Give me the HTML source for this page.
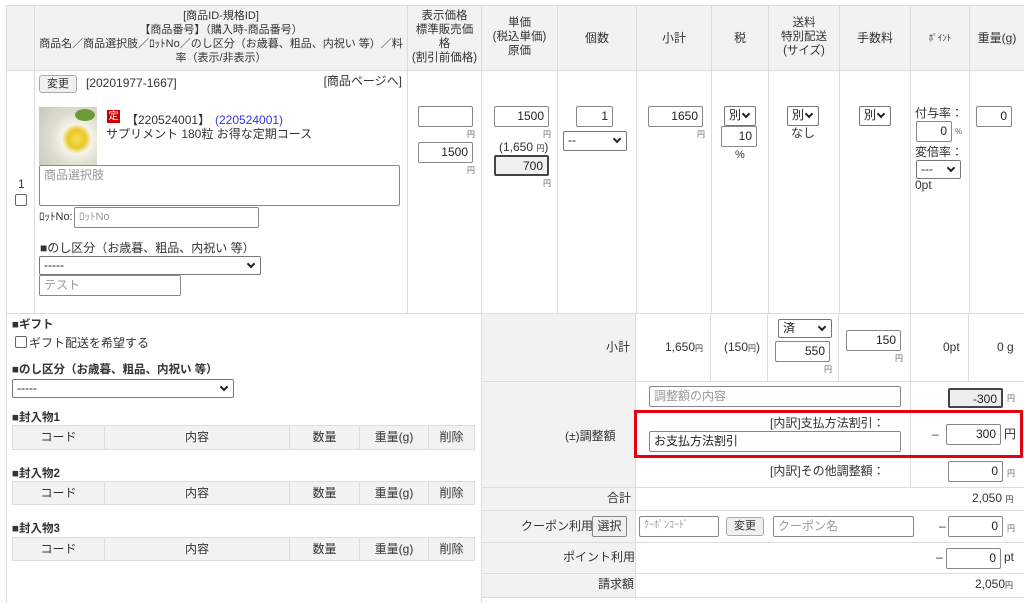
<!DOCTYPE html>
<html><head><meta charset="utf-8"><style>
*{box-sizing:border-box;margin:0;padding:0}
body{width:1024px;height:602px;overflow:hidden;background:#fff;font-family:"Liberation Sans","Noto Sans CJK JP",sans-serif;font-size:12px;color:#333;position:relative}
.a{position:absolute}
.c{position:absolute;border:1px solid #ddd}
.g{background:#f2f2f2}
.t{position:absolute;white-space:nowrap;line-height:14px}
.in{position:absolute;border:1px solid #888;border-radius:2px;background:#fff;text-align:right;padding-right:4px;font-size:12px;line-height:18px;color:#222;white-space:nowrap}
.ph{color:#999;text-align:left;padding-left:4px}
.sel{position:absolute;border:1px solid #777;border-radius:2px;background:#fff;font-size:12px;line-height:17px;padding-left:4px;color:#222;white-space:nowrap}
.sel:after{content:"";position:absolute;right:6px;top:4px;width:4px;height:4px;border-right:2px solid #222;border-bottom:2px solid #222;transform:rotate(45deg)}
.y{position:absolute;font-size:8px;color:#666}
.btn{position:absolute;border:1px solid #aaa;border-radius:3px;background:#f0f0f0;font-size:11px;text-align:center;line-height:16px}
.cb{position:absolute;width:12px;height:12px;border:1px solid #666;border-radius:2px;background:#fff}
.ctr{text-align:center}
</style></head><body>
<div class="c g" style="left:6px;top:5px;width:29px;height:66px"></div>
<div class="c g" style="left:34px;top:5px;width:374px;height:66px"></div>
<div class="c g" style="left:407px;top:5px;width:75px;height:66px"></div>
<div class="c g" style="left:481px;top:5px;width:77px;height:66px"></div>
<div class="c g" style="left:557px;top:5px;width:80px;height:66px"></div>
<div class="c g" style="left:636px;top:5px;width:76px;height:66px"></div>
<div class="c g" style="left:711px;top:5px;width:58px;height:66px"></div>
<div class="c g" style="left:768px;top:5px;width:72px;height:66px"></div>
<div class="c g" style="left:839px;top:5px;width:72px;height:66px"></div>
<div class="c g" style="left:910px;top:5px;width:60px;height:66px"></div>
<div class="c g" style="left:969px;top:5px;width:56px;height:66px"></div>
<div class="t ctr" style="left:34px;width:374px;top:9px;font-size:11px">[商品ID-規格ID]<br>【商品番号】（購入時-商品番号）<br>商品名／商品選択肢／ﾛｯﾄNo／のし区分（お歳暮、粗品、内祝い 等）／料<br>率（表示/非表示）</div>
<div class="t ctr" style="left:407px;width:75px;top:9px;font-size:11.5px">表示価格<br>標準販売価<br>格<br>(割引前価格)</div>
<div class="t ctr" style="left:481px;width:77px;top:16px;font-size:11.5px">単価<br>(税込単価)<br>原価</div>
<div class="t ctr" style="left:557px;width:80px;top:31px">個数</div>
<div class="t ctr" style="left:636px;width:76px;top:31px">小計</div>
<div class="t ctr" style="left:711px;width:58px;top:31px">税</div>
<div class="t ctr" style="left:768px;width:72px;top:16px;font-size:11.5px">送料<br>特別配送<br>(サイズ)</div>
<div class="t ctr" style="left:839px;width:72px;top:31px">手数料</div>
<div class="t ctr" style="left:910px;width:60px;top:31px;font-size:9px">ﾎﾟｲﾝﾄ</div>
<div class="t ctr" style="left:969px;width:56px;top:31px">重量(g)</div>
<div class="c" style="left:6px;top:70px;width:29px;height:244px"></div>
<div class="c" style="left:34px;top:70px;width:374px;height:244px"></div>
<div class="c" style="left:407px;top:70px;width:75px;height:244px"></div>
<div class="c" style="left:481px;top:70px;width:77px;height:244px"></div>
<div class="c" style="left:557px;top:70px;width:80px;height:244px"></div>
<div class="c" style="left:636px;top:70px;width:76px;height:244px"></div>
<div class="c" style="left:711px;top:70px;width:58px;height:244px"></div>
<div class="c" style="left:768px;top:70px;width:72px;height:244px"></div>
<div class="c" style="left:839px;top:70px;width:72px;height:244px"></div>
<div class="c" style="left:910px;top:70px;width:60px;height:244px"></div>
<div class="c" style="left:969px;top:70px;width:56px;height:244px"></div>
<div class="t" style="left:18px;top:177px">1</div>
<div class="cb" style="left:15px;top:194px"></div>
<div class="btn" style="left:39px;top:75px;width:38px;height:18px">変更</div>
<div class="t" style="left:86px;top:76px">[20201977-1667]</div>
<div class="t" style="right:622px;top:74px">[商品ページへ]</div>
<div class="a" style="left:39px;top:107px;width:58px;height:58px;background:radial-gradient(circle at 65% 55%,#f4e060 0,#e8c820 18%,#f6f3e8 30%,#dcdcd0 55%,#c8c8b8 100%)"></div>
<div class="a" style="left:75px;top:109px;width:20px;height:12px;background:#6c9c3a;border-radius:50%"></div>
<div class="a" style="left:107px;top:110px;width:13px;height:13px;background:#c00;color:#fff;font-size:10px;line-height:13px;text-align:center">定</div>
<div class="t" style="left:126px;top:113px">【220524001】</div>
<div class="t" style="left:215px;top:113px;color:#3333ee">(220524001)</div>
<div class="t" style="left:106px;top:127px">サプリメント 180粒 お得な定期コース</div>
<div class="in ph" style="left:39px;top:165px;width:361px;height:41px;line-height:18px">商品選択肢</div>
<div class="t" style="left:39px;top:210px;font-size:11px">ﾛｯﾄNo:</div>
<div class="in ph" style="left:74px;top:207px;width:185px;height:21px;font-size:11px">ﾛｯﾄNo</div>
<div class="t" style="left:40px;top:241px">■のし区分（お歳暮、粗品、内祝い 等）</div>
<div class="sel" style="left:39px;top:256px;width:222px;height:19px">-----</div>
<div class="in ph" style="left:39px;top:275px;width:142px;height:21px">テスト</div>
<div class="in" style="left:418px;top:106px;width:55px;height:21px"></div><div class="y" style="left:467px;top:129px">円</div>
<div class="in" style="left:418px;top:142px;width:55px;height:21px">1500</div><div class="y" style="left:467px;top:165px">円</div>
<div class="in" style="left:494px;top:106px;width:55px;height:21px">1500</div><div class="y" style="left:543px;top:129px">円</div>
<div class="t" style="left:499px;top:140px">(1,650 <span style="font-size:8px">円</span>)</div>
<div class="in" style="left:494px;top:155px;width:55px;height:21px;background:#f0f0f0;border:2px solid #444">700</div><div class="y" style="left:543px;top:178px">円</div>
<div class="in" style="left:576px;top:106px;width:37px;height:21px">1</div>
<div class="sel" style="left:563px;top:131px;width:64px;height:20px">--</div>
<div class="in" style="left:648px;top:106px;width:55px;height:21px">1650</div><div class="y" style="left:697px;top:129px">円</div>
<div class="sel" style="left:724px;top:106px;width:32px;height:20px">別</div>
<div class="in" style="left:721px;top:126px;width:36px;height:21px">10</div>
<div class="t" style="left:735px;top:148px;font-size:11px">%</div>
<div class="sel" style="left:787px;top:106px;width:32px;height:20px">別</div>
<div class="t" style="left:791px;top:126px">なし</div>
<div class="sel" style="left:859px;top:106px;width:32px;height:20px">別</div>
<div class="t" style="left:915px;top:106px">付与率：</div>
<div class="in" style="left:916px;top:121px;width:36px;height:21px">0</div><div class="y" style="left:955px;top:127px">%</div>
<div class="t" style="left:915px;top:145px">変倍率：</div>
<div class="sel" style="left:916px;top:160px;width:45px;height:19px">---</div>
<div class="t" style="left:915px;top:178px">0pt</div>
<div class="in" style="left:976px;top:106px;width:36px;height:21px">0</div>
<div class="a" style="left:6px;top:313px;width:476px;height:290px;border-left:1px solid #ddd;border-right:1px solid #ddd;border-top:1px solid #ddd"></div>
<div class="t" style="left:12px;top:318px;font-weight:bold;font-size:11.5px">■ギフト</div>
<div class="cb" style="left:15px;top:336px"></div>
<div class="t" style="left:29px;top:336px">ギフト配送を希望する</div>
<div class="t" style="left:12px;top:363px;font-weight:bold;font-size:11.5px">■のし区分（お歳暮、粗品、内祝い 等）</div>
<div class="sel" style="left:12px;top:379px;width:222px;height:19px">-----</div>
<div class="t" style="left:12px;top:411px;font-weight:bold;font-size:11.5px">■封入物1</div>
<div class="t" style="left:12px;top:467px;font-weight:bold;font-size:11.5px">■封入物2</div>
<div class="t" style="left:12px;top:522px;font-weight:bold;font-size:11.5px">■封入物3</div>
<div class="c g" style="left:481px;top:313px;width:155px;height:69px"></div>
<div class="c" style="left:635px;top:313px;width:76px;height:69px"></div>
<div class="c" style="left:710px;top:313px;width:58px;height:69px"></div>
<div class="c" style="left:767px;top:313px;width:72px;height:69px"></div>
<div class="c" style="left:838px;top:313px;width:73px;height:69px"></div>
<div class="c" style="left:910px;top:313px;width:59px;height:69px"></div>
<div class="c" style="left:968px;top:313px;width:57px;height:69px"></div>
<div class="t" style="left:606px;top:340px">小計</div>
<div class="t" style="left:665px;top:340px">1,650<span style="font-size:8px">円</span></div>
<div class="t" style="left:724px;top:340px">(150<span style="font-size:8px">円</span>)</div>
<div class="sel" style="left:778px;top:319px;width:54px;height:19px">済</div>
<div class="in" style="left:775px;top:341px;width:55px;height:21px">550</div><div class="y" style="left:824px;top:364px">円</div>
<div class="in" style="left:846px;top:330px;width:55px;height:21px">150</div><div class="y" style="left:895px;top:353px">円</div>
<div class="t" style="left:943px;top:340px">0pt</div>
<div class="t" style="left:997px;top:340px">0 g</div>
<div class="c g" style="left:481px;top:381px;width:155px;height:107px"></div>
<div class="c" style="left:635px;top:381px;width:276px;height:107px"></div>
<div class="c" style="left:910px;top:381px;width:115px;height:107px"></div>
<div class="t" style="left:565px;top:429px">(±)調整額</div>
<div class="in ph" style="left:649px;top:386px;width:252px;height:21px">調整額の内容</div>
<div class="in" style="left:948px;top:388px;width:55px;height:20px;background:#eee;border:2px solid #444">-300</div><div class="y" style="left:1007px;top:393px">円</div>
<div class="a" style="left:634px;top:410px;width:389px;height:48px;border:3px solid #e60012"></div>
<div class="t" style="left:770px;top:416px">[内訳]支払方法割引：</div>
<div class="in ph" style="left:649px;top:431px;width:252px;height:21px;color:#222">お支払方法割引</div>
<div class="t" style="left:932px;top:427px">–</div>
<div class="in" style="left:946px;top:424px;width:55px;height:21px">300</div><div class="t" style="left:1004px;top:427px">円</div>
<div class="t" style="left:770px;top:464px">[内訳]その他調整額：</div>
<div class="in" style="left:948px;top:461px;width:55px;height:21px">0</div><div class="y" style="left:1007px;top:468px">円</div>
<div class="c g" style="left:481px;top:487px;width:155px;height:24px"></div>
<div class="c" style="left:635px;top:487px;width:390px;height:24px"></div>
<div class="t" style="left:607px;top:491px">合計</div>
<div class="t" style="left:972px;top:491px">2,050 <span style="font-size:8px">円</span></div>
<div class="c g" style="left:481px;top:510px;width:155px;height:33px"></div>
<div class="c" style="left:635px;top:510px;width:390px;height:33px"></div>
<div class="t" style="left:521px;top:519px">クーポン利用</div>
<div class="btn" style="left:592px;top:516px;width:35px;height:21px;border-color:#888;font-size:12px;line-height:19px;border-radius:2px">選択</div>
<div class="in ph" style="left:639px;top:516px;width:80px;height:21px;font-size:10px">ｸｰﾎﾟﾝｺｰﾄﾞ</div>
<div class="btn" style="left:726px;top:517px;width:38px;height:19px">変更</div>
<div class="in ph" style="left:773px;top:516px;width:141px;height:21px">クーポン名</div>
<div class="t" style="left:939px;top:519px">–</div>
<div class="in" style="left:948px;top:516px;width:55px;height:21px">0</div><div class="y" style="left:1007px;top:523px">円</div>
<div class="c g" style="left:481px;top:542px;width:155px;height:32px"></div>
<div class="c" style="left:635px;top:542px;width:390px;height:32px"></div>
<div class="t" style="left:563px;top:550px">ポイント利用</div>
<div class="t" style="left:936px;top:550px">–</div>
<div class="in" style="left:946px;top:548px;width:55px;height:21px">0</div><div class="t" style="left:1004px;top:550px">pt</div>
<div class="c g" style="left:481px;top:573px;width:155px;height:25px"></div>
<div class="c" style="left:635px;top:573px;width:390px;height:25px"></div>
<div class="t" style="left:598px;top:577px">請求額</div>
<div class="t" style="left:975px;top:577px">2,050<span style="font-size:8px">円</span></div>
<div class="c g" style="left:12px;top:425px;width:93px;height:25px"></div><div class="c g" style="left:104px;top:425px;width:186px;height:25px"></div><div class="c g" style="left:289px;top:425px;width:71px;height:25px"></div><div class="c g" style="left:359px;top:425px;width:70px;height:25px"></div><div class="c g" style="left:428px;top:425px;width:47px;height:25px"></div>
<div class="t ctr" style="left:12px;width:93px;top:430px">コード</div><div class="t ctr" style="left:104px;width:186px;top:430px">内容</div><div class="t ctr" style="left:289px;width:71px;top:430px">数量</div><div class="t ctr" style="left:359px;width:70px;top:430px">重量(g)</div><div class="t ctr" style="left:428px;width:47px;top:430px">削除</div>
<div class="c g" style="left:12px;top:481px;width:93px;height:24px"></div><div class="c g" style="left:104px;top:481px;width:186px;height:24px"></div><div class="c g" style="left:289px;top:481px;width:71px;height:24px"></div><div class="c g" style="left:359px;top:481px;width:70px;height:24px"></div><div class="c g" style="left:428px;top:481px;width:47px;height:24px"></div>
<div class="t ctr" style="left:12px;width:93px;top:486px">コード</div><div class="t ctr" style="left:104px;width:186px;top:486px">内容</div><div class="t ctr" style="left:289px;width:71px;top:486px">数量</div><div class="t ctr" style="left:359px;width:70px;top:486px">重量(g)</div><div class="t ctr" style="left:428px;width:47px;top:486px">削除</div>
<div class="c g" style="left:12px;top:537px;width:93px;height:24px"></div><div class="c g" style="left:104px;top:537px;width:186px;height:24px"></div><div class="c g" style="left:289px;top:537px;width:71px;height:24px"></div><div class="c g" style="left:359px;top:537px;width:70px;height:24px"></div><div class="c g" style="left:428px;top:537px;width:47px;height:24px"></div>
<div class="t ctr" style="left:12px;width:93px;top:542px">コード</div><div class="t ctr" style="left:104px;width:186px;top:542px">内容</div><div class="t ctr" style="left:289px;width:71px;top:542px">数量</div><div class="t ctr" style="left:359px;width:70px;top:542px">重量(g)</div><div class="t ctr" style="left:428px;width:47px;top:542px">削除</div>
</body></html>
